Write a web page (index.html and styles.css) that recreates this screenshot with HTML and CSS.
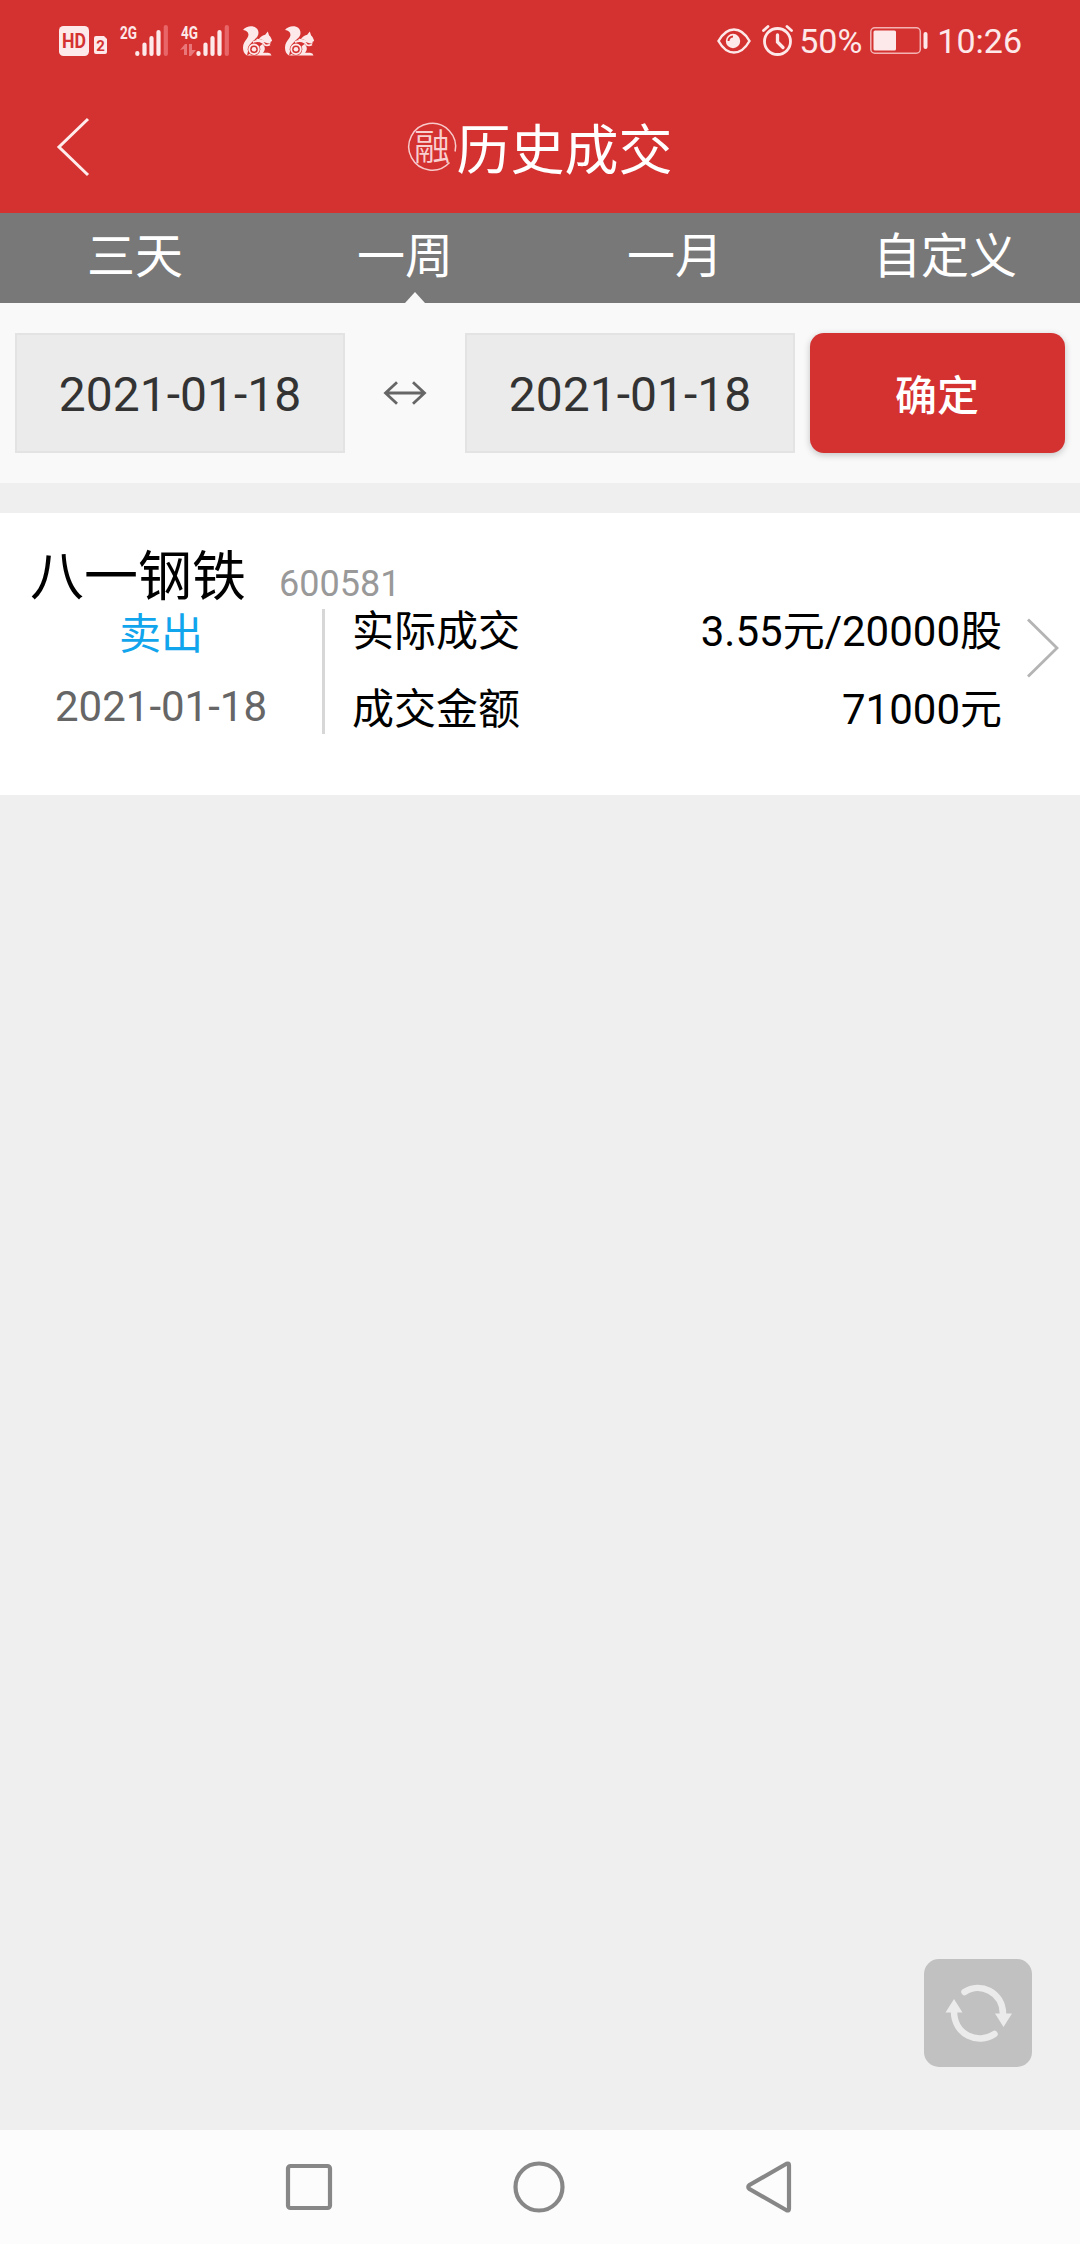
FILE: index.html
```html
<!DOCTYPE html>
<html lang="zh-CN">
  <head>
    <meta charset="UTF-8" />
    <meta name="viewport" content="width=device-width, initial-scale=1.0" />
    <title>历史成交</title>
    <link rel="stylesheet" href="styles.css">
  </head>
  <body>
    <header class="header">
      <div class="status-bar">
        <div class="status-left">
          <svg class="icon-hd" width="48" height="30" viewBox="0 0 48 30">
            <rect width="30" height="30" rx="4.5" fill="#fde9e9" />
            <text x="15" y="22" class="hd-text" textLength="24" lengthAdjust="spacingAndGlyphs">HD</text>
            <path d="M37 10h8l3 3v13q0 2-2 2h-9q-2 0-2-2V12q0-2 2-2z" fill="#fde9e9" />
            <text x="41.5" y="24.5" class="sim-text">2</text>
          </svg>
          <svg class="icon-signal" width="51" height="32" viewBox="0 0 51 32">
            <text x="1" y="15" class="net-text" textLength="17" lengthAdjust="spacingAndGlyphs">2G</text>
            <path d="M18.3 29v1M25.500 20.500v9.500M32.500 14v16M39.500 8v22" class="bars" />
            <path d="M46.800 3v27" class="bars dim" />
          </svg>
          <svg class="icon-signal" width="51" height="32" viewBox="0 0 51 32">
            <text x="1" y="15" class="net-text" textLength="17" lengthAdjust="spacingAndGlyphs">4G</text>
            <path d="M0 26l5-6h2v11H4v-6zM9 20h3v6h4l-5 6H9z" fill="#e97678" />
            <path d="M18.500 29v1M25.500 20.500v9.500M32.500 14v16M39.500 8v22" class="bars" />
            <path d="M46.800 3v27" class="bars dim" />
          </svg>
          <svg class="icon-squirrel" width="30" height="30" viewBox="0 0 30 30">
            <use href="#squirrel" />
          </svg>
          <svg class="icon-squirrel" width="30" height="30" viewBox="0 0 30 30">
            <g id="squirrel">
              <path d="M0 4C2 1.500 5 .3 8 .3c4.500 0 7.500 2.700 7.500 6.700 0 3.500-3 5.500-5.500 8-1.500 1.500-3.500 3-4 6L4 29.500C1 28 0 25 0 21.500c0-4 2-6.500 4-9 1.500-2 2-4 .8-6C3.800 5 2 4 0 4z" fill="#fde9e9" />
              <path d="M16 12.800c2-2.500 4-3.600 6.200-4l2.600-3.300 1.300 4c1.300 1 2.200 2.500 3 5.300-1.500 1.600-4 2-6.300 1.200-2-1.300-4-2.600-6.800-3.200z" fill="#fde9e9" />
              <path d="M10 16.200c5-2.700 10-.5 12 2.800 1.500.6 3.300.4 5-.5M13.500 13.800c5-.6 9 3 14 3" fill="none" stroke="#fde9e9" stroke-width="1.800" />
              <path d="M19.500 18c3 3 3 6 .5 8.800h5q3 .3 3.500 2.700H4l5-3z" fill="#fde9e9" />
              <circle cx="11" cy="23.300" r="6.300" fill="#d43231" />
              <circle cx="11" cy="23.300" r="4.800" fill="none" stroke="#fde9e9" stroke-width="1.900" />
              <circle cx="11" cy="23.300" r="2.300" fill="#fde9e9" />
            </g>
          </svg>
        </div>
        <div class="status-right">
          <svg class="icon-eye" width="34" height="26" viewBox="0 0 34 26">
            <path d="M1.500 13C6 5 11 1.500 17 1.500S28 5 32.500 13C28 21 23 24.500 17 24.500S6 21 1.500 13z" fill="none" stroke="#fde9e9" stroke-width="2.500" />
            <circle cx="16" cy="13" r="7.200" fill="#fde9e9" />
            <path d="M11.500 13a4.500 4.500 0 0 1 4.500-4.500" fill="none" stroke="#d43231" stroke-width="2" />
          </svg>
          <svg class="icon-alarm" width="31" height="32" viewBox="0 0 31 32">
            <g fill="none" stroke="#fde9e9" stroke-width="2.800" stroke-linecap="round">
              <circle cx="15.500" cy="17.500" r="13" />
              <path d="M15.500 11v7l5.500 5.500" stroke-width="3.300" />
              <path d="M1.500 6.500L6 2.500M29.500 6.500L25 2.500" />
            </g>
          </svg>
          <span class="percent">50%</span>
          <svg class="icon-battery" width="58" height="27" viewBox="0 0 58 27">
            <rect x=".8" y=".8" width="49.500" height="25.400" rx="4" fill="none" stroke="#f3b3b3" stroke-width="1.500" />
            <rect x="3.500" y="3.500" width="22.500" height="20" rx="1.500" fill="#fde9e9" />
            <rect x="53.500" y="5" width="4" height="17" rx="2" fill="#fde9e9" />
          </svg>
          <span class="time">10:26</span>
        </div>
      </div>

      <div class="title-bar">
        <svg class="back" width="34" height="60" viewBox="0 0 34 60">
          <path d="M32 2L3 30l29 28" fill="none" stroke="#ffecec" stroke-width="3" />
        </svg>
        <h1 class="title">
          <svg class="badge" width="48" height="48" viewBox="0 0 48 48">
            <path d="M47.100 28.500A23.400 23.400 0 1 0 41.500 39.500" fill="none" stroke="#f8caca" stroke-width="1.500" />
            <text x="24" y="37" class="badge-text">融</text>
          </svg>
          <span class="title-text">历史成交</span>
        </h1>
      </div>
    </header>

    <nav class="tabs">
      <a class="tab">三天</a>
      <a class="tab active">一周</a>
      <a class="tab">一月</a>
      <a class="tab">自定义</a>
    </nav>

    <section class="filter">
      <div class="date-box">2021-01-18</div>
      <svg class="range" width="44" height="24" viewBox="0 0 44 24">
        <path d="M2 12h40M14 1.200L2.500 12 14 22.800M30 1.200L41.500 12 30 22.800" fill="none" stroke="#666" stroke-width="2.800" />
      </svg>
      <div class="date-box">2021-01-18</div>
      <button class="confirm">确定</button>
    </section>

    <main class="content">
      <article class="deal">
        <div class="deal-head">
          <span class="stock-name">八一钢铁</span>
          <span class="stock-code">600581</span>
        </div>
        <div class="deal-body">
          <div class="deal-side">
            <div class="action">卖出</div>
            <div class="deal-date">2021-01-18</div>
          </div>
          <div class="deal-info">
            <div class="row"><span>实际成交</span><span>3.55元/20000股</span></div>
            <div class="row"><span>成交金额</span><span>71000元</span></div>
          </div>
          <svg class="arrow" width="34" height="60" viewBox="0 0 34 60">
            <path d="M2 1.500L31 30 2 58.500" fill="none" stroke="#b4b4b4" stroke-width="2.800" />
          </svg>
        </div>
      </article>
    </main>

    <button class="refresh">
      <svg width="108" height="108" viewBox="0 0 108 108">
        <g fill="none" stroke="#ebebeb" stroke-width="6.500" stroke-linecap="round">
          <path d="M40.500 33C56 22.500 79 33 79 55" />
          <path d="M70.500 75C54 86 30 76 30 52" />
        </g>
        <path d="M71 54.500h17L79.500 68zM21.500 53.500h17L30 40z" fill="#ebebeb" />
      </svg>
    </button>

    <footer class="nav-bar">
      <svg width="46" height="46" viewBox="0 0 46 46">
        <rect x="2" y="2" width="42" height="42" rx="2.500" />
      </svg>
      <svg width="52" height="52" viewBox="0 0 52 52">
        <circle cx="26" cy="26" r="23.500" />
      </svg>
      <svg width="46" height="52" viewBox="0 0 46 52">
        <path d="M40.500 2.800L3.500 24q-2.500 2 0 4l37 21.200q2.500 1 2.500-1.500V4.300q0-2.500-2.500-1.500z" />
      </svg>
    </footer>
  </body>
</html>
```
FILE: styles.css
```css
* {
  box-sizing: border-box;
}
body {
  margin: 0;
  height: 2244px;
  display: flex;
  flex-direction: column;
  background: #efefef;
  color: #000;
  font-family: Roboto, "Noto Sans CJK SC", sans-serif;
}
svg {
  display: block;
  flex: none;
  overflow: visible;
}

/* Header */
.header {
  height: 213px;
  background: #d43231;
}
.status-bar {
  height: 81px;
  padding: 0 58px 0 59px;
  display: flex;
  justify-content: space-between;
  align-items: center;
  color: #fde9e9;
}
.status-left,
.status-right {
  display: flex;
  align-items: center;
  height: 60px;
}
.icon-signal {
  margin-left: 10px;
  margin-top: -2px;
}
.icon-hd {
  margin-right: 2px;
}
.icon-squirrel {
  margin-left: 12px;
}
.hd-text,
.sim-text {
  font-size: 20px;
  font-weight: bold;
  fill: #d43231;
  text-anchor: middle;
}
.sim-text {
  font-size: 15px;
}
.net-text {
  font-size: 18px;
  font-weight: bold;
  fill: #fde9e9;
}
.bars {
  fill: none;
  stroke: #fde9e9;
  stroke-width: 4.2;
  stroke-linecap: round;
}
.dim {
  stroke: #e96668;
}
.icon-alarm {
  margin: -2px 7px 0 11px;
}
.percent,
.time {
  font-size: 34px;
  line-height: 40px;
}
.percent {
  margin-left: -1px;
}
.icon-battery {
  margin: 0 9px 0 8px;
}
.title-bar {
  height: 132px;
  padding: 0 56px;
  display: grid;
  grid-template-columns: 34px 1fr 34px;
  align-items: center;
}
.title {
  margin: 0;
  display: flex;
  justify-content: center;
  align-items: center;
  color: #fff;
  font-size: 54px;
  font-weight: normal;
  line-height: 80px;
}
.title-text {
  padding: 9px 0 0 1px;
}
.badge-text {
  font-size: 36px;
  font-weight: 350;
  fill: #f9d0d0;
  text-anchor: middle;
}

/* Period tabs */
.tabs {
  height: 90px;
  display: grid;
  grid-template-columns: repeat(4, 1fr);
  background: #787878;
}
.tab {
  position: relative;
  color: #fff;
  font-size: 48px;
  line-height: 88px;
  text-align: center;
}
.tab.active::after {
  content: "";
  position: absolute;
  left: 135px;
  bottom: 0;
  border: 10px solid transparent;
  border-top: 0;
  border-bottom: 11px solid #f9f9f9;
}

/* Date range */
.filter {
  height: 180px;
  padding: 0 15px;
  display: flex;
  align-items: center;
  background: #f9f9f9;
}
.date-box {
  width: 330px;
  height: 120px;
  border: 2px solid #e3e3e3;
  background: #ebebeb;
  color: #333;
  font-size: 48px;
  line-height: 119px;
  text-align: center;
}
.range {
  margin: 0 38px;
}
.confirm {
  width: 255px;
  height: 120px;
  margin-left: 15px;
  padding: 0 1px 2px 0;
  border: none;
  border-radius: 14px;
  background: #d43231;
  box-shadow: 0 2px 7px rgba(0, 0, 0, 0.22);
  color: #fff;
  font-family: inherit;
  font-size: 42px;
  font-weight: 500;
}

/* Deal list */
.content {
  flex: 1;
  padding-top: 30px;
}
.deal {
  height: 282px;
  background: #fff;
}
.deal-head {
  height: 96px;
  padding: 25px 30px 0;
  display: flex;
  align-items: baseline;
  line-height: 80px;
}
.stock-name {
  font-size: 54px;
}
.stock-code {
  margin-left: 33px;
  color: #999;
  font-size: 36px;
}
.deal-body {
  height: 125px;
  display: flex;
}
.deal-side {
  width: 325px;
  border-right: 3px solid #d7d7d7;
  font-size: 42px;
  text-align: center;
}
.action {
  padding-top: 3px;
  color: #10a5ec;
  line-height: 46px;
}
.deal-date {
  margin-top: 25px;
  color: #666;
  line-height: 48px;
}
.deal-info {
  flex: 1;
  padding: 2px 0 0 27px;
}
.row {
  display: flex;
  justify-content: space-between;
  font-size: 42px;
  line-height: 42px;
}
.row + .row {
  margin-top: 36px;
}
.arrow {
  margin: 9px 20px 0 24px;
}

.refresh {
  position: absolute;
  left: 924px;
  top: 1959px;
  width: 108px;
  height: 108px;
  padding: 0;
  border: none;
  border-radius: 15px;
  background: #c1c1c1;
}

/* System navigation */
.nav-bar {
  height: 114px;
  padding: 0 288px 0 286px;
  display: flex;
  justify-content: space-between;
  align-items: center;
  background: #fcfcfc;
  fill: none;
  stroke: #878787;
  stroke-width: 4.2;
}
```
